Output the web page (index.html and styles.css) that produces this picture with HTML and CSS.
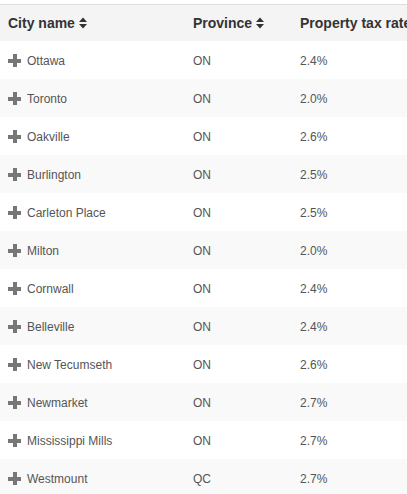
FILE: index.html
```html
<!DOCTYPE html>
<html>
<head>
<meta charset="utf-8">
<link rel="stylesheet" href="styles.css">
</head>
<body>
<table class="grid">
  <colgroup><col class="c1"><col class="c2"><col class="c3"></colgroup>
  <thead>
    <tr>
      <th>City name <svg class="sort" width="8" height="12" viewBox="0 0 8 12"><path d="M4 0.5 L8 5 L0 5 Z M0 7 L8 7 L4 11.5 Z" fill="#333"/></svg></th>
      <th>Province <svg class="sort" width="8" height="12" viewBox="0 0 8 12"><path d="M4 0.5 L8 5 L0 5 Z M0 7 L8 7 L4 11.5 Z" fill="#333"/></svg></th>
      <th>Property tax rate</th>
    </tr>
  </thead>
  <tbody>
    <tr><td><span class="plus"></span>Ottawa</td><td>ON</td><td>2.4%</td></tr>
    <tr><td><span class="plus"></span>Toronto</td><td>ON</td><td>2.0%</td></tr>
    <tr><td><span class="plus"></span>Oakville</td><td>ON</td><td>2.6%</td></tr>
    <tr><td><span class="plus"></span>Burlington</td><td>ON</td><td>2.5%</td></tr>
    <tr><td><span class="plus"></span>Carleton Place</td><td>ON</td><td>2.5%</td></tr>
    <tr><td><span class="plus"></span>Milton</td><td>ON</td><td>2.0%</td></tr>
    <tr><td><span class="plus"></span>Cornwall</td><td>ON</td><td>2.4%</td></tr>
    <tr><td><span class="plus"></span>Belleville</td><td>ON</td><td>2.4%</td></tr>
    <tr><td><span class="plus"></span>New Tecumseth</td><td>ON</td><td>2.6%</td></tr>
    <tr><td><span class="plus"></span>Newmarket</td><td>ON</td><td>2.7%</td></tr>
    <tr><td><span class="plus"></span>Mississippi Mills</td><td>ON</td><td>2.7%</td></tr>
    <tr><td><span class="plus"></span>Westmount</td><td>QC</td><td>2.7%</td></tr>
  </tbody>
</table>
</body>
</html>
```
FILE: styles.css
```css
html, body {
  margin: 0;
  padding: 0;
  overflow: hidden;
  background: #fff;
}
body {
  padding-top: 4px;
  font-family: "Liberation Sans", Arial, sans-serif;
  color: #333;
}
.grid {
  border-collapse: collapse;
  table-layout: fixed;
  width: 500px;
  border-top: 1px solid #ddd;
}
.c1 { width: 185px; }
.c2 { width: 107px; }
.c3 { width: 208px; }
.grid th {
  height: 36px;
  padding: 0 8px;
  text-align: left;
  font-size: 14px;
  font-weight: bold;
  background: #f4f4f4;
  white-space: nowrap;
  vertical-align: middle;
}
.sort {
  vertical-align: -1px;
}
.grid td {
  height: 36px;
  padding: 2px 8px 0;
  font-size: 12px;
  color: #555;
  vertical-align: middle;
  white-space: nowrap;
}
.grid tbody tr:nth-child(even) td {
  background: #f9f9f9;
}
.plus {
  display: inline-block;
  position: relative;
  width: 13px;
  height: 13px;
  margin-right: 6px;
  vertical-align: -2px;
}
.plus::before, .plus::after {
  content: "";
  position: absolute;
  background: #777;
}
.plus::before {
  left: 0;
  top: 5px;
  width: 13px;
  height: 4px;
}
.plus::after {
  left: 5px;
  top: 0;
  width: 4px;
  height: 13px;
}
```
